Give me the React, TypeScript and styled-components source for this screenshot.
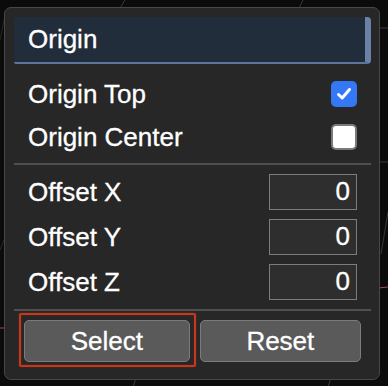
import { FC } from 'react'
import styled, { createGlobalStyle } from 'styled-components'

const GlobalStyle = createGlobalStyle`
  html, body {
    margin: 0;
    padding: 0;
    background: #0b0b0b;
  }
  body {
    font-family: 'Liberation Sans', Arial, Helvetica, sans-serif;
  }
`

const offsets = [
  { axis: 'X', value: 0 },
  { axis: 'Y', value: 0 },
  { axis: 'Z', value: 0 }
]

const origins = [
  { label: 'Origin Top', checked: true },
  { label: 'Origin Center', checked: false }
]

const App: FC = () => {
  return (
    <>
      <GlobalStyle />
      <Viewport>
        <GridLines width="388" height="386" viewBox="0 0 388 386">
          <line x1="118" y1="12" x2="126" y2="-2" stroke="#3a3a3a" />
          <line x1="297" y1="12" x2="304" y2="-2" stroke="#3a3a3a" />
          <line x1="0" y1="40" x2="4" y2="20" stroke="#262626" />
          <line x1="378" y1="28" x2="388" y2="28" stroke="#3a3a3a" />
          <line x1="378" y1="162" x2="388" y2="162" stroke="#3a3a3a" />
          <line x1="381" y1="254" x2="388" y2="212" stroke="#3a3a3a" />
          <line x1="378" y1="288" x2="388" y2="287" stroke="#a84a4a" />
          <line x1="0" y1="328" x2="6" y2="328" stroke="#a84a4a" />
          <line x1="0" y1="250" x2="4" y2="240" stroke="#2a2a2a" />
          <line x1="132" y1="390" x2="136" y2="378" stroke="#3a3a3a" />
          <line x1="327" y1="390" x2="331" y2="378" stroke="#3a3a3a" />
        </GridLines>
        <Panel>
          <Header>Origin</Header>

          <Section>
            {origins.map((o) => (
              <Row key={o.label}>
                <Label>{o.label}</Label>
                <Checkbox $checked={o.checked}>
                  {o.checked && (
                    <svg width="18" height="18" viewBox="0 0 18 18">
                      <path
                        d="M3.5 9.5 L7.2 13 L14.5 4.5"
                        fill="none"
                        stroke="#fff"
                        strokeWidth="3"
                        strokeLinecap="round"
                        strokeLinejoin="round"
                      />
                    </svg>
                  )}
                </Checkbox>
              </Row>
            ))}
          </Section>

          <Divider />

          <InputSection>
            {offsets.map((o) => (
              <InputRow key={o.axis}>
                <Label>Offset {o.axis}</Label>
                <NumberInput type="text" defaultValue={String(o.value)} readOnly />
              </InputRow>
            ))}
          </InputSection>

          <Divider />

          <ButtonBar>
            <Button $focused>Select</Button>
            <Button>Reset</Button>
          </ButtonBar>
        </Panel>
      </Viewport>
    </>
  )
}

const Viewport = styled.div`
  position: relative;
  width: 388px;
  height: 386px;
  padding: 7px 8px 0 4px;
  box-sizing: border-box;
  overflow: hidden;
`

const GridLines = styled.svg`
  position: absolute;
  left: 0;
  top: 0;
  pointer-events: none;
`

const Panel = styled.div`
  position: relative;
  width: 376px;
  height: 373px;
  box-sizing: border-box;
  background: #272727;
  border: 1px solid #474747;
  border-radius: 7px;
  padding: 9px 8px 0 9px;
  display: flex;
  flex-direction: column;
`

const Header = styled.div`
  height: 47px;
  box-sizing: border-box;
  display: flex;
  align-items: center;
  padding-left: 14px;
  background: #222d3c;
  border-bottom: 2px solid #5d7598;
  border-right: 6px solid #6a82a8;
  border-radius: 2px 4px 4px 2px;
  color: #ffffff;
  font-size: 26px;
  -webkit-text-stroke: 0.3px #ffffff;
`

const Section = styled.div`
  display: flex;
  flex-direction: column;
  margin-top: 8px;
  margin-bottom: 5px;
`

const Row = styled.div`
  height: 43px;
  display: flex;
  align-items: center;
  justify-content: space-between;
  padding: 0 14px;
`

const Label = styled.span`
  color: #ffffff;
  font-size: 26px;
  line-height: 1;
  -webkit-text-stroke: 0.3px #ffffff;
`

const Checkbox = styled.span<{ $checked?: boolean }>`
  width: 26px;
  height: 26px;
  box-sizing: border-box;
  border-radius: 5px;
  display: flex;
  align-items: center;
  justify-content: center;
  background: ${(p) => (p.$checked ? '#3478f6' : '#ffffff')};
  border: ${(p) => (p.$checked ? 'none' : '2px solid #7a7a7a')};
`

const Divider = styled.div`
  height: 2px;
  background: #4f4f4f;
`

const InputSection = styled.div`
  display: flex;
  flex-direction: column;
  margin-top: 4px;
  margin-bottom: 5px;
`

const InputRow = styled(Row)`
  height: 45px;
`

const NumberInput = styled.input`
  width: 88px;
  height: 36px;
  box-sizing: border-box;
  background: #2e2e2e;
  border: 1px solid #7c7c7c;
  border-radius: 0;
  color: #ffffff;
  font-family: 'Liberation Sans', Arial, sans-serif;
  font-size: 26px;
  text-align: right;
  padding: 0 6px 0 4px;
  outline: none;
  -webkit-text-stroke: 0.3px #ffffff;
`

const ButtonBar = styled.div`
  display: flex;
  gap: 10px;
  padding: 0 10px;
  margin-top: 9px;
`

const Button = styled.button<{ $focused?: boolean }>`
  position: relative;
  flex: 1 1 auto;
  height: 42px;
  box-sizing: border-box;
  background: #5a5a5a;
  border: 1px solid #7c7c7c;
  border-radius: 5px;
  color: #ffffff;
  font-family: 'Liberation Sans', Arial, sans-serif;
  font-size: 26px;
  padding: 0 8px;
  cursor: pointer;
  outline: none;
  -webkit-text-stroke: 0.3px #ffffff;

  &::after {
    content: '';
    display: ${(p) => (p.$focused ? 'block' : 'none')};
    position: absolute;
    top: -8px;
    left: -6px;
    right: -7px;
    bottom: -6px;
    border: 2px solid #c9361c;
    border-radius: 2px;
    box-shadow: 0 0 1px #c9361c, inset 0 0 1px #c9361c;
    pointer-events: none;
  }
`

export default App
